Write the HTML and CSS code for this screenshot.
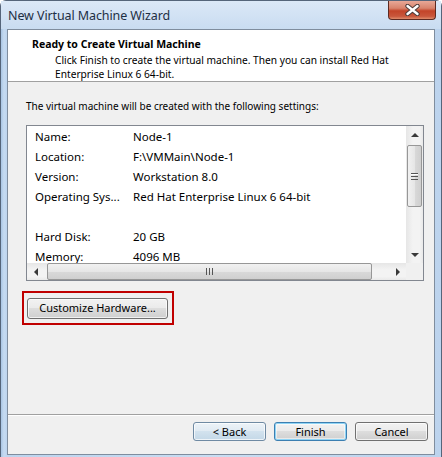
FILE: index.html
```html
<!DOCTYPE html>
<html lang="en">
<head>
    <meta charset="UTF-8">
    <title>New Virtual Machine Wizard</title>
    <link rel="stylesheet" href="styles.css">
</head>
<body>
    <div class="window">
        <!-- Aero style caption -->
        <div class="titlebar">
            <span class="caption">New Virtual Machine Wizard</span>
            <div class="close-btn">
                <svg width="17" height="12" viewBox="0 0 17 12">
                    <path d="M3.5 2 L13.5 10 M13.5 2 L3.5 10" stroke="#4a3a38" stroke-width="4.4" stroke-linecap="round"/>
                    <path d="M3.5 2 L13.5 10 M13.5 2 L3.5 10" stroke="#fff" stroke-width="2.4" stroke-linecap="round"/>
                </svg>
            </div>
        </div>

        <div class="client">
            <div class="header">
                <h1>Ready to Create Virtual Machine</h1>
                <p>Click Finish to create the virtual machine. Then you can install Red Hat<br>Enterprise Linux 6 64-bit.</p>
            </div>

            <div class="content">
                <p class="intro">The virtual machine will be created with the following settings:</p>

                <div class="listbox">
                    <div class="list-main">
                        <div class="list-rows">
                            <div class="row"><span class="key">Name:</span><span>Node-1</span></div>
                            <div class="row"><span class="key">Location:</span><span>F:\VMMain\Node-1</span></div>
                            <div class="row"><span class="key">Version:</span><span>Workstation 8.0</span></div>
                            <div class="row"><span class="key">Operating Sys...</span><span>Red Hat Enterprise Linux 6 64-bit</span></div>
                            <div class="row"></div>
                            <div class="row"><span class="key">Hard Disk:</span><span>20 GB</span></div>
                            <div class="row"><span class="key">Memory:</span><span>4096 MB</span></div>
                        </div>
                        <div class="vscroll">
                            <div class="arrow"><span class="tri up"></span></div>
                            <div class="vtrack">
                                <div class="vthumb"><span class="grip-v"></span></div>
                            </div>
                            <div class="arrow"><span class="tri down"></span></div>
                        </div>
                    </div>
                    <div class="hscroll-row">
                        <div class="hscroll">
                            <div class="arrow-h"><span class="tri left"></span></div>
                            <div class="htrack">
                                <div class="hthumb"><span class="grip-h"></span></div>
                            </div>
                            <div class="arrow-h"><span class="tri right"></span></div>
                        </div>
                        <div class="corner"></div>
                    </div>
                </div>

                <!-- red marker round the button -->
                <div class="highlight">
                    <button class="btn btn-wide">Customize Hardware...</button>
                </div>
            </div>

            <div class="footer">
                <button class="btn btn-hover">&lt; Back</button>
                <button class="btn btn-default">Finish</button>
                <button class="btn">Cancel</button>
            </div>
        </div>
    </div>
</body>
</html>
```

FILE: styles.css
```css
html, body {
    margin: 0;
    padding: 0;
}
body {
    font-family: "Noto Sans", "Open Sans", sans-serif;
    background: #fff;
}
.window {
    width: 442px;
    height: 457px;
    box-sizing: border-box;
    display: flex;
    flex-direction: column;
    border: 1px solid #55657a;
    border-bottom: none;
    border-radius: 6px 6px 0 0;
    background: linear-gradient(90deg, #a9c5e4 0px, #c6dbf1 3px, #bdd4ee 6px, #c9ddf2 50%, #bcd3ed 100%);
    padding: 0 6px 2px 6px;
}
.titlebar {
    height: 28px;
    display: flex;
    justify-content: space-between;
    align-items: flex-start;
    background: linear-gradient(180deg, #dbe8f7 0%, #c9dcf1 100%);
    margin: 0 -6px;
    padding: 0 5px 0 7px;
}
.caption {
    font-size: 12.5px;
    color: #1e2f44;
    margin-top: 6px;
    letter-spacing: -0.1px;
}
/* red close button */
.close-btn {
    width: 48px;
    height: 19px;
    border: 1px solid #5c2a22;
    border-top: none;
    border-radius: 0 0 4px 4px;
    box-sizing: border-box;
    background: linear-gradient(180deg, #e8a897 0%, #d8836c 40%, #c34429 55%, #c9573c 85%, #e08c6c 100%);
    display: flex;
    align-items: center;
    justify-content: center;
}
.client {
    flex: 1;
    display: flex;
    flex-direction: column;
    border: 1px solid #7f8d9e;
    background: #f0f0f0;
}
.header {
    background: #fff;
    height: 51px;
    border-bottom: 1px solid #a0a0a0;
    box-sizing: content-box;
}
.header h1 {
    font-size: 10.5px;
    font-weight: bold;
    margin: 7px 0 0 24px;
    line-height: 14px;
    color: #000;
}
.header p {
    font-size: 10.2px;
    margin: 3px 0 0 47px;
    line-height: 13.5px;
    color: #000;
}
.content {
    flex: 1;
    padding: 17px 0 0 18px;
}
.intro {
    font-size: 10px;
    line-height: 14px;
    margin: 0 0 12px 0;
}
.listbox {
    width: 398px;
    height: 156px;
    box-sizing: border-box;
    border: 1px solid #828790;
    background: #fff;
    display: flex;
    flex-direction: column;
}
.list-main {
    flex: 1;
    display: flex;
    overflow: hidden;
}
.list-rows {
    flex: 1;
    overflow: hidden;
    padding-top: 1px;
}
.row {
    height: 20px;
    line-height: 20px;
    font-size: 11.5px;
    padding-left: 8px;
    display: flex;
    white-space: nowrap;
}
.key {
    width: 98px;
}
.vscroll {
    width: 17px;
    display: flex;
    flex-direction: column;
    background: linear-gradient(90deg, #e6e6e6, #f3f3f3 40%, #f3f3f3 80%, #e9e9e9);
}
.arrow {
    height: 17px;
    display: flex;
    align-items: center;
    justify-content: center;
}
.vtrack {
    flex: 1;
    padding-top: 2px;
}
.vthumb {
    height: 62px;
    margin: 0 1px;
    box-sizing: border-box;
    border: 1px solid #979797;
    border-radius: 2px;
    background: linear-gradient(90deg, #f1f1f1 0%, #e6e6e6 50%, #d9d9d9 51%, #cfcfcf 100%);
    display: flex;
    align-items: center;
    justify-content: center;
}
.grip-v {
    width: 7px;
    height: 5px;
    border-top: 1px solid #555;
    border-bottom: 1px solid #555;
    background: linear-gradient(#fff 0 1px, transparent 1px 2px, #555 2px 3px, transparent 3px);
}
.hscroll-row {
    height: 17px;
    display: flex;
}
.hscroll {
    flex: 1;
    display: flex;
    background: linear-gradient(180deg, #e6e6e6, #f3f3f3 40%, #f3f3f3 80%, #e9e9e9);
}
.arrow-h {
    width: 17px;
    display: flex;
    align-items: center;
    justify-content: center;
}
.htrack {
    flex: 1;
    padding-left: 3px;
    padding-right: 17px;
}
.hthumb {
    height: 100%;
    box-sizing: border-box;
    border: 1px solid #979797;
    border-radius: 2px;
    background: linear-gradient(180deg, #f1f1f1 0%, #e6e6e6 50%, #d9d9d9 51%, #cfcfcf 100%);
    display: flex;
    align-items: center;
    justify-content: center;
}
.grip-h {
    width: 5px;
    height: 7px;
    border-left: 1px solid #555;
    border-right: 1px solid #555;
    background: linear-gradient(90deg, transparent 0 2px, #555 2px 3px, transparent 3px);
}
.corner {
    width: 17px;
    background: #f0f0f0;
}
.tri {
    width: 0;
    height: 0;
    display: block;
}
.tri.up {
    border-left: 4px solid transparent;
    border-right: 4px solid transparent;
    border-bottom: 4px solid #3a3a3a;
}
.tri.down {
    border-left: 4px solid transparent;
    border-right: 4px solid transparent;
    border-top: 4px solid #3a3a3a;
}
.tri.left {
    border-top: 4px solid transparent;
    border-bottom: 4px solid transparent;
    border-right: 4px solid #3a3a3a;
}
.tri.right {
    border-top: 4px solid transparent;
    border-bottom: 4px solid transparent;
    border-left: 4px solid #3a3a3a;
}
.highlight {
    margin: 10px 0 0 -4px;
    width: 152px;
    height: 34px;
    box-sizing: border-box;
    border: 2px solid #c00000;
    padding: 2px 0 0 3px;
}
/* Windows 7 push button */
.btn {
    font-family: "Noto Sans", "Open Sans", sans-serif;
    font-size: 11px;
    height: 19px;
    width: 73px;
    padding: 0;
    line-height: 16px;
    border: 1px solid #707070;
    border-radius: 3px;
    color: #000;
    background: linear-gradient(180deg, #f2f2f2 0%, #ebebeb 45%, #dddddd 50%, #cfcfcf 100%);
    box-shadow: inset 0 0 0 1px rgba(255,255,255,0.7);
}
.btn-wide {
    width: 141px;
    height: 21px;
}
.btn-hover {
    border-color: #6f8aa3;
    background: linear-gradient(180deg, #edf3f8 0%, #e1ebf3 45%, #d2e2ee 50%, #c4d8e7 100%);
}
.btn-default {
    border-color: #3c7fb1;
    box-shadow: inset 0 0 0 1px #8fd4f5, inset 0 0 0 2px rgba(255,255,255,0.5);
}
.footer {
    height: 40px;
    border-top: 1px solid #a0a0a0;
    box-shadow: inset 0 1px 0 #fff;
    display: flex;
    justify-content: flex-end;
    align-items: flex-start;
    gap: 8px;
    padding: 7px 6px 0 0;
    box-sizing: border-box;
}
```
